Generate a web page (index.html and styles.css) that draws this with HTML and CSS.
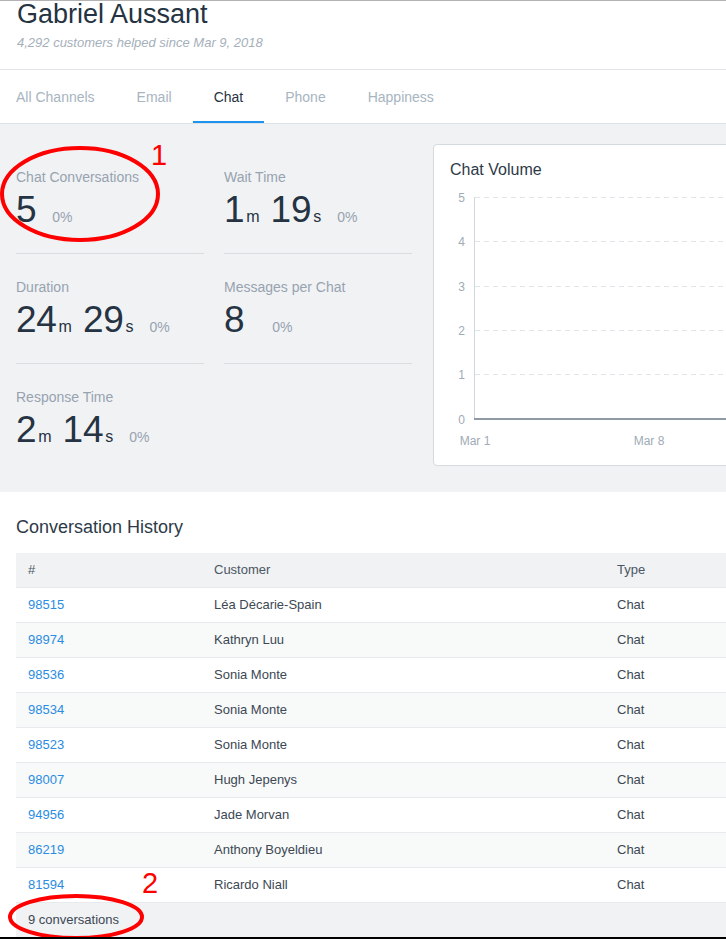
FILE: index.html
```html
<!DOCTYPE html>
<html>
<head>
<meta charset="utf-8">
<link rel="stylesheet" href="styles.css">
</head>
<body>
<div class="frame">
  <div class="page">
    <header class="profile">
      <h1 class="name">Gabriel Aussant</h1>
      <p class="since">4,292 customers helped since Mar 9, 2018</p>
    </header>
    <nav class="tabs">
      <a class="tab first">All Channels</a>
      <a class="tab">Email</a>
      <a class="tab active">Chat</a>
      <a class="tab">Phone</a>
      <a class="tab">Happiness</a>
    </nav>
    <section class="stats">
      <div class="stat-grid">
        <div class="stat">
          <div class="label">Chat Conversations</div>
          <div class="value"><span class="num">5</span><span class="pct">0%</span></div>
        </div>
        <div class="stat">
          <div class="label">Wait Time</div>
          <div class="value"><span class="num">1</span><span class="unit">m</span><span class="num">19</span><span class="unit">s</span><span class="pct">0%</span></div>
        </div>
        <div class="stat">
          <div class="label">Duration</div>
          <div class="value"><span class="num">24</span><span class="unit">m</span><span class="num">29</span><span class="unit">s</span><span class="pct">0%</span></div>
        </div>
        <div class="stat">
          <div class="label">Messages per Chat</div>
          <div class="value"><span class="num">8</span><span class="pct wide">0%</span></div>
        </div>
        <div class="stat last">
          <div class="label">Response Time</div>
          <div class="value"><span class="num">2</span><span class="unit">m</span><span class="num">14</span><span class="unit">s</span><span class="pct">0%</span></div>
        </div>
      </div>
      <div class="chart-card">
        <h2 class="chart-title">Chat Volume</h2>
        <svg class="chart" width="480" height="270" viewBox="0 0 480 270">
          <g stroke="#dfe5e9" stroke-width="1" stroke-dasharray="5 4">
            <line x1="41" y1="12.5" x2="480" y2="12.5"/>
            <line x1="41" y1="56.5" x2="480" y2="56.5"/>
            <line x1="41" y1="101.5" x2="480" y2="101.5"/>
            <line x1="41" y1="145.5" x2="480" y2="145.5"/>
            <line x1="41" y1="189.5" x2="480" y2="189.5"/>
          </g>
          <line x1="40.5" y1="12" x2="40.5" y2="234" stroke="#cfd6dc" stroke-width="1"/>
          <line x1="40" y1="234" x2="480" y2="234" stroke="#8e9ba7" stroke-width="2"/>
          <g class="axis-text" text-anchor="end">
            <text x="31" y="17">5</text>
            <text x="31" y="61">4</text>
            <text x="31" y="105.5">3</text>
            <text x="31" y="150">2</text>
            <text x="31" y="194">1</text>
            <text x="31" y="238.5">0</text>
          </g>
          <g class="axis-text" text-anchor="middle">
            <text x="41" y="259.5">Mar 1</text>
            <text x="215" y="259.5">Mar 8</text>
          </g>
        </svg>
      </div>
    </section>
    <section class="history">
      <h2 class="history-title">Conversation History</h2>
      <table class="conv">
        <thead>
          <tr><th class="c-id">#</th><th class="c-cust">Customer</th><th class="c-type">Type</th></tr>
        </thead>
        <tbody>
          <tr><td><a class="link">98515</a></td><td>Léa Décarie-Spain</td><td>Chat</td></tr>
          <tr><td><a class="link">98974</a></td><td>Kathryn Luu</td><td>Chat</td></tr>
          <tr><td><a class="link">98536</a></td><td>Sonia Monte</td><td>Chat</td></tr>
          <tr><td><a class="link">98534</a></td><td>Sonia Monte</td><td>Chat</td></tr>
          <tr><td><a class="link">98523</a></td><td>Sonia Monte</td><td>Chat</td></tr>
          <tr><td><a class="link">98007</a></td><td>Hugh Jepenys</td><td>Chat</td></tr>
          <tr><td><a class="link">94956</a></td><td>Jade Morvan</td><td>Chat</td></tr>
          <tr><td><a class="link">86219</a></td><td>Anthony Boyeldieu</td><td>Chat</td></tr>
          <tr><td><a class="link">81594</a></td><td>Ricardo Niall</td><td>Chat</td></tr>
        </tbody>
        <tfoot>
          <tr><td colspan="3">9 conversations</td></tr>
        </tfoot>
      </table>
    </section>
  </div>
  <svg class="annotations" width="726" height="939" viewBox="0 0 726 939">
    <ellipse cx="80" cy="194" rx="78" ry="46" fill="none" stroke="#ff0000" stroke-width="4"/>
    <text x="151" y="165" class="mark">1</text>
    <ellipse cx="76" cy="917" rx="66" ry="21" fill="none" stroke="#ff0000" stroke-width="4"/>
    <text x="142" y="893" class="mark">2</text>
  </svg>
</div>
</body>
</html>
```
FILE: styles.css
```css
* { box-sizing: border-box; }
html, body { margin: 0; padding: 0; background: #fff; }
body {
  font-family: "Liberation Sans", Arial, Helvetica, sans-serif;
  color: #2d3a47;
  overflow: hidden;
}
.frame {
  position: relative;
  width: 726px;
  height: 939px;
  overflow: hidden;
  border-top: 1px solid #b3b3b3;
  border-bottom: 2px solid #000;
}
.page {
  width: 1000px;
}
.profile {
  display: flex;
  flex-direction: column;
  height: 69px;
  padding: 0 16px;
  border-bottom: 1px solid #e1e6ea;
}
.name {
  margin: 0 0 0 1px;
  font-size: 27px;
  line-height: 26px;
  font-weight: normal;
  color: #253342;
}
.since {
  margin: 7px 0 0 1px;
  font-size: 13px;
  line-height: 18px;
  font-style: italic;
  color: #a5b0ba;
}
.tabs {
  display: flex;
  height: 54px;
  border-bottom: 1px solid #dce1e5;
}
.tab {
  display: flex;
  align-items: center;
  height: 53px;
  padding: 2px 21px 0 21px;
  font-size: 14px;
  color: #a7b4c1;
  border-bottom: 2px solid transparent;
}
.tab.first { padding-left: 16px; }
.tab.active {
  color: #253342;
  border-bottom-color: #1d93ee;
}
.stats {
  display: flex;
  align-items: flex-start;
  height: 368px;
  padding: 20px 0 0 16px;
  background: #f1f2f4;
}
.stat-grid {
  display: grid;
  grid-template-columns: 188px 188px;
  column-gap: 20px;
}
.stat {
  padding: 25px 0 21px;
  border-bottom: 1px solid #d9dde1;
}
.stat.last { border-bottom: none; }
.label {
  font-size: 14px;
  line-height: 17px;
  color: #97a3b0;
}
.value {
  margin-top: 2px;
  height: 44px;
  line-height: 44px;
  white-space: nowrap;
  color: #253342;
}
.num {
  font-size: 37px;
  letter-spacing: -0.3px;
}
.unit {
  font-size: 16px;
  margin: 0 11px 0 2px;
}
.pct {
  font-size: 14px;
  color: #97a3b0;
  margin-left: 16px;
}
.unit + .pct { margin-left: 5px; }
.pct.wide { margin-left: 28px; }
.chart-card {
  width: 480px;
  height: 322px;
  margin-left: 21px;
  background: #fff;
  border: 1px solid #d4dadf;
  border-radius: 4px;
}
.chart-title {
  margin: 0;
  padding: 15px 16px 0;
  height: 40px;
  font-size: 16px;
  line-height: 19px;
  font-weight: normal;
  color: #2d3a47;
}
.chart { display: block; }
.axis-text text {
  font-family: "Liberation Sans", Arial, sans-serif;
  font-size: 12px;
  fill: #a0abb6;
}
.history {
  padding: 24px 16px 0;
}
.history-title {
  margin: 0 0 15px;
  font-size: 18px;
  line-height: 22px;
  font-weight: normal;
  color: #2d3a47;
}
.conv {
  width: 100%;
  border-collapse: collapse;
  font-size: 13px;
}
.conv th, .conv td {
  text-align: left;
  padding: 0 12px;
  height: 35px;
  font-weight: normal;
  color: #3c4854;
}
.conv thead th {
  height: 34px;
  background: #f1f2f4;
  color: #4a5663;
}
.c-id { width: 186px; }
.c-cust { width: 403px; }
.conv tbody tr { border-top: 1px solid #e8ebed; }
.conv tbody tr:nth-child(even) { background: #f8f9f9; }
.link { color: #2a8ce2; }
.conv tfoot td {
  height: 35px;
  background: #f1f2f4;
  color: #3c4854;
  border-top: 1px solid #e8ebed;
}
.annotations {
  position: absolute;
  left: 0;
  top: -1px;
  pointer-events: none;
}
.mark {
  font-family: "Liberation Sans", Arial, sans-serif;
  font-size: 29px;
  fill: #ff0000;
}
```
